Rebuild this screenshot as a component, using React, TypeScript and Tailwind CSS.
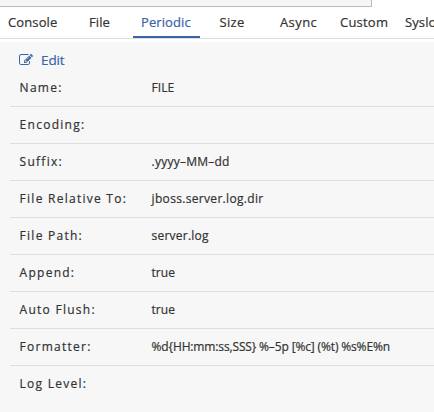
const tabs = [
  { name: 'Console', cls: 'w-[81px] tracking-[0.12px]' },
  { name: 'File', cls: 'w-[44px] tracking-[0.1px]' },
  { name: 'Periodic', cls: 'w-[67px] pl-2 tracking-[0.1px] text-[#3b63a8]', active: true },
  { name: 'Size', cls: 'w-[80px] pl-[19.500px] tracking-[0.3px]' },
  { name: 'Async', cls: 'w-[60px] tracking-[0.4px]' },
  { name: 'Custom', cls: 'w-[65px] tracking-[0.22px]' },
  { name: 'Syslo', cls: 'w-[60px] tracking-[0.1px]' },
];

const rows = [
  { label: 'Name:', value: 'FILE', cls: 'tracking-[0px]' },
  { label: 'Encoding:', value: '', cls: '' },
  { label: 'Suffix:', value: '.yyyy–MM–dd', cls: 'tracking-[0.24px]' },
  { label: 'File Relative To:', value: 'jboss.server.log.dir', cls: 'tracking-[0.32px]' },
  { label: 'File Path:', value: 'server.log', cls: 'tracking-[0.22px]' },
  { label: 'Append:', value: 'true', cls: '' },
  { label: 'Auto Flush:', value: 'true', cls: '' },
  { label: 'Formatter:', value: '%d{HH:mm:ss,SSS} %–5p [%c] (%t) %s%E%n', cls: 'tracking-[-0.14px]' },
  { label: 'Log Level:', value: '', cls: '' },
];

function EditIcon() {
  return (
    <svg width="14" height="14" viewBox="0 0 1792 1792" fill="currentColor">
      <path d="M888 1184l116-116-152-152-116 116v56h96v96h56zm440-720q-16-16-33 1l-350 350q-17 17-1 33t33-1l350-350q17-17 1-33zm80 594v190q0 119-84.500 203.500t-203.500 84.500h-832q-119 0-203.500-84.500t-84.500-203.500v-832q0-119 84.500-203.500t203.500-84.500h832q63 0 117 25 15 7 18 23 3 17-9 29l-49 49q-14 14-32 8-23-6-45-6h-832q-66 0-113 47t-47 113v832q0 66 47 113t113 47h832q66 0 113-47t47-113v-126q0-13 9-22l64-64q15-15 35-7t20 29zm-96-738l288 288-672 672h-288v-288zm444 132l-92 92-288-288 92-92q28-28 68-28t68 28l152 152q28 28 28 68t-28 68z" />
    </svg>
  );
}

export default function App() {
  return (
    <div className="h-[412px] w-[434px] overflow-hidden bg-white font-['Open_Sans','Noto_Sans',sans-serif] text-[#333] [-webkit-text-stroke:0.2px]">
      <div className="h-[7px] w-[372px] border-r border-b border-[#bbb] bg-[#f6f6f6]" />
      <div className="flex h-8 w-[434px] overflow-hidden border-b border-[#dedede] pl-2 text-[13px]">
        {tabs.map((t) => (
          <div key={t.name} className={`h-[31px] shrink-0 leading-[31px] ${t.cls} ${t.active ? 'border-b-2 border-[#3b63a8]' : ''}`}>
            {t.name}
          </div>
        ))}
      </div>
      <div className="mt-[3px] h-[370px] bg-[#f7f7f7] pl-[10px]">
        <div className="flex h-[28px] items-center pt-[8px] pl-[9px] text-[#3b63a8]">
          <EditIcon />
          <span className="ml-[8px] text-[13.5px] leading-4 tracking-[-0.1px]">Edit</span>
        </div>
        {rows.map((r) => (
          <div key={r.label} className="flex h-[37px] items-center border-b border-[#dedede] pl-[9.600px] whitespace-nowrap last:border-transparent">
            <span className="w-[132px] shrink-0 text-[12px] tracking-[1.26px]">{r.label}</span>
            <span className={`text-[12px] ${r.cls}`}>{r.value}</span>
          </div>
        ))}
      </div>
    </div>
  );
}
